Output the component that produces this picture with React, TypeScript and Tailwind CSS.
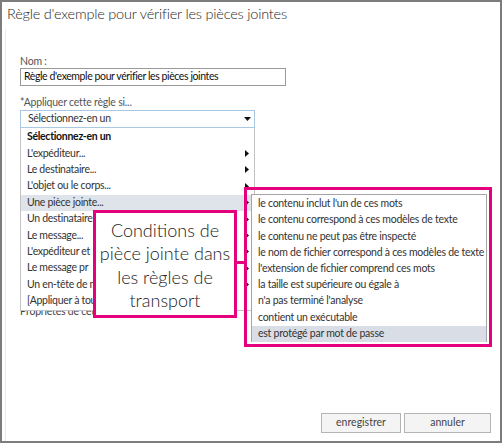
import React from "react";

// éléments du menu déroulant
const conditions = [
  { label: "Sélectionnez-en un", bold: true, arrow: false },
  { label: "L'expéditeur...", arrow: true },
  { label: "Le destinataire...", arrow: true },
  { label: "L'objet ou le corps...", arrow: true },
  { label: "Une pièce jointe...", arrow: true, active: true },
  { label: "Un destinataire...", arrow: true },
  { label: "Le message...", arrow: true },
  { label: "L'expéditeur et", arrow: true },
  { label: "Le message pr", arrow: true },
  { label: "Un en-tête de m", arrow: true },
  { label: "[Appliquer à tou", arrow: false },
];

// sous-menu "Une pièce jointe..."
const attachmentItems = [
  "le contenu inclut l'un de ces mots",
  "le contenu correspond à ces modèles de texte",
  "le contenu ne peut pas être inspecté",
  "le nom de fichier correspond à ces modèles de texte",
  "l'extension de fichier comprend ces mots",
  "la taille est supérieure ou égale à",
  "n'a pas terminé l'analyse",
  "contient un exécutable",
  "est protégé par mot de passe",
];

const font = { fontFamily: '"Segoe UI", Lato, "Open Sans", sans-serif' };

function RightArrow() {
  return (
    <svg width="4" height="7" viewBox="0 0 4 7" className="shrink-0">
      <polygon points="0,0 4,3.5 0,7" fill="#111" />
    </svg>
  );
}

export default function App() {
  return (
    <div
      className="relative flex h-[443px] w-[502px] flex-col border-2 border-[#7c7c7c] bg-white text-[#333]"
      style={font}
    >
      {/* titre */}
      <h1 className="whitespace-nowrap pl-[5px] pt-[1px] text-[14.5px] font-light leading-[22px] tracking-[-0.2px] text-[#1e1e1e]">
        Règle d'exemple pour vérifier les pièces jointes
      </h1>

      {/* panneau */}
      <div className="ml-[3px] mt-[4px] flex flex-1 flex-col border-l border-[#ececec] pb-[8px] pl-[14px] pr-[9px]">
        <div className="mt-[26px] h-[13px] text-[10.5px] leading-[13px] tracking-[-0.2px] text-[#555]">Nom :</div>
        <div className="flex h-[18px] w-[266px] items-center whitespace-nowrap border border-[#9a9a9a] pl-[3px] text-[10.5px] tracking-[-0.4px] text-[#111]">
          Règle d'exemple pour vérifier les pièces jointes
        </div>

        <div className="mt-[10px] h-[13px] text-[10.5px] leading-[13px] tracking-[-0.2px] text-[#555]">
          *Appliquer cette règle si...
        </div>
        <div className="mt-[1px] flex h-[18px] w-[235px] items-center justify-between border border-[#a9c8e3] pl-[7px] pr-[3px] text-[10.5px] tracking-[-0.3px] text-[#333]">
          <span>Sélectionnez-en un</span>
          <svg width="7" height="4" viewBox="0 0 7 4">
            <polygon points="0,0 7,0 3.5,4" fill="#111" />
          </svg>
        </div>

        <div className="mt-[176px] h-[14px] text-[10.5px] leading-[14px] tracking-[-0.2px] text-[#444]">
          Propriétés de cette règle...
        </div>

        <div className="mt-auto flex justify-end gap-[3px]">
          <button className="h-[20px] w-[80px] border border-[#b4b4b4] bg-[#f4f4f4] text-[10.5px] text-[#444]">
            enregistrer
          </button>
          <button className="h-[20px] w-[87px] border border-[#b4b4b4] bg-[#f4f4f4] text-[10.5px] text-[#444]">
            annuler
          </button>
        </div>
      </div>

      {/* liste déroulante ouverte */}
      <ul className="absolute left-[18px] top-[126px] w-[235px] border border-t-0 border-[#c4c4c4] bg-white pb-[1px] pt-[1px]">
        {conditions.map((c) => (
          <li
            key={c.label}
            className={`flex h-[16.4px] items-center justify-between whitespace-nowrap pl-[6px] pr-[5px] text-[10.5px] tracking-[-0.3px] ${
              c.bold ? "font-bold text-[#111]" : "text-[#333]"
            } ${c.active ? "bg-[#dfe3ea]" : ""}`}
          >
            <span>{c.label}</span>
            {c.arrow && <RightArrow />}
          </li>
        ))}
      </ul>

      {/* sous-menu */}
      <ul className="absolute left-[249px] top-[192px] h-[148px] w-[236px] border border-[#a5a5a5] bg-white pt-[1px]">
        {attachmentItems.map((item, i) => (
          <li
            key={item}
            className={`flex h-[16.2px] items-center whitespace-nowrap pl-[6px] text-[10.5px] tracking-[-0.25px] text-[#333] ${
              i === attachmentItems.length - 1 ? "bg-[#d9dee6]" : ""
            }`}
          >
            {item}
          </li>
        ))}
      </ul>

      {/* annotations */}
      <div className="absolute left-[242px] top-[185px] h-[160px] w-[248px] border-[3px] border-[#e5007d]" />
      <div className="absolute left-[235px] top-[259px] h-[3px] w-[8px] bg-[#e5007d]" />
      <div className="absolute left-[91px] top-[208px] flex h-[108px] w-[144px] items-center justify-center whitespace-nowrap border-[3px] border-[#e5007d] bg-white pt-[3px] text-center text-[18px] font-light leading-[23.3px] text-[#222]">
        Conditions de
        <br />
        pièce jointe dans
        <br />
        les règles de
        <br />
        transport
      </div>
    </div>
  );
}
